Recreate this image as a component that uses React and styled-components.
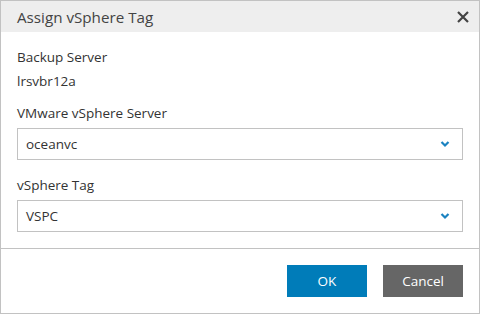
import React from "react";
import styled, { createGlobalStyle } from "styled-components";

const GlobalStyle = createGlobalStyle`
  html, body {
    margin: 0;
    padding: 0;
    background: #ffffff;
  }
  body {
    font-family: "Open Sans", "Segoe UI", Arial, sans-serif;
    color: #333333;
  }
`

const Dialog = styled.div`
  width: 480px;
  height: 314px;
  box-sizing: border-box;
  border: 1px solid #c2c2c2;
  display: flex;
  flex-direction: column;
  background: #ffffff;
`

const Header = styled.div`
  height: 31px;
  background-color: #eeeeee;
  display: flex;
  align-items: center;
  justify-content: space-between;
  padding: 0 9px 0 16px;
`

const Title = styled.span`
  font-size: 15.2px;
  color: #444444;
`

const CloseButton = styled.button`
  border: none;
  background: transparent;
  padding: 0;
  width: 14px;
  height: 14px;
  display: flex;
  cursor: pointer;
`

const Body = styled.div`
  flex: 1;
  padding: 15px 16px 16px 16px;
  display: flex;
  flex-direction: column;
`

const Label = styled.div`
  font-size: 13.5px;
  line-height: 20px;
  color: #333333;
  margin-top: ${p => p.gap || 0}px;
`

const Value = styled.div`
  font-size: 13.5px;
  line-height: 20px;
  margin-top: 4px;
  color: #333333;
`

const Select = styled.div`
  margin-top: 5px;
  height: 32px;
  box-sizing: border-box;
  border: 1px solid #c2c2c2;
  display: flex;
  align-items: center;
  justify-content: space-between;
  padding: 0 12px 0 8px;
  font-size: 13.5px;
  color: #333333;
`

const Footer = styled.div`
  border-top: 1px solid #c2c2c2;
  padding: 16px 16px 16px;
  display: flex;
  justify-content: flex-end;
  gap: 16px;
`

const Button = styled.button`
  width: 80px;
  height: 32px;
  border: none;
  font-family: inherit;
  font-size: 13.5px;
  color: #ffffff;
  background-color: ${p => (p.primary ? "#007cb9" : "#666666")};
  cursor: pointer;
`

function Chevron() {
  return (
    <svg width="10" height="8" viewBox="0 0 10 8">
      <path d="M1.5 2 L5 5.5 L8.5 2" fill="none" stroke="#1a82c0" strokeWidth="2.2" />
    </svg>
  )
}

function CloseIcon() {
  return (
    <svg width="14" height="14" viewBox="0 0 14 14">
      <path d="M2 2 L12 12 M12 2 L2 12" stroke="#444444" strokeWidth="2.2" />
    </svg>
  )
}

export default function App() {
  return (
    <>
      <GlobalStyle />
      <Dialog>
        <Header>
          <Title>Assign vSphere Tag</Title>
          <CloseButton aria-label="Close"><CloseIcon /></CloseButton>
        </Header>
        <Body>
          <Label>Backup Server</Label>
          <Value>lrsvbr12a</Value>
          <Label gap={12}>VMware vSphere Server</Label>
          <Select>
            <span>oceanvc</span>
            <Chevron />
          </Select>
          <Label gap={15}>vSphere Tag</Label>
          <Select>
            <span>VSPC</span>
            <Chevron />
          </Select>
        </Body>
        <Footer>
          <Button primary>OK</Button>
          <Button>Cancel</Button>
        </Footer>
      </Dialog>
    </>
  )
}
